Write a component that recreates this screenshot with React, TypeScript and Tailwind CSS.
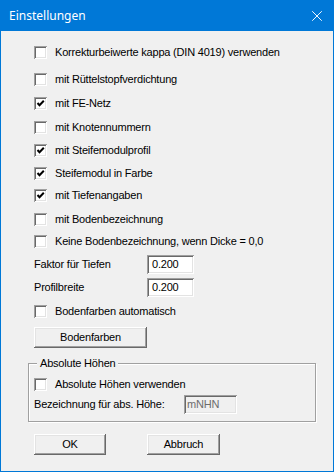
import { X } from 'lucide-react';

const sunken =
  'shadow-[inset_1px_1px_0_#a0a0a0,inset_-1px_-1px_0_#ffffff,inset_2px_2px_0_#696969,inset_-2px_-2px_0_#e3e3e3]';
const raised =
  'shadow-[inset_-1px_-1px_0_#696969,inset_1px_1px_0_#ffffff,inset_-2px_-2px_0_#a0a0a0,inset_2px_2px_0_#e3e3e3]';

function CheckBox({ checked }: { checked?: boolean }) {
  return (
    <span className={`w-[13px] h-[13px] bg-white shrink-0 flex items-center justify-center ${sunken}`}>
      {checked && (
        <svg width="13" height="13" viewBox="0 0 13 13">
          <polyline points="3.5,6 5.5,8.2 9.8,3.8" fill="none" stroke="#000" strokeWidth="2" />
        </svg>
      )}
    </span>
  );
}

function CheckRow({ label, checked, className = '' }: { label: string; checked?: boolean; className?: string }) {
  return (
    <div className={`flex items-center h-[13px] ${className}`}>
      <CheckBox checked={checked} />
      <span className="ml-[8px] leading-none">{label}</span>
    </div>
  );
}

function Button({ label, width }: { label: string; width: string }) {
  return (
    <button className={`h-[21px] ${width} bg-[#f0f0f0] ${raised} flex items-center justify-center leading-none`}>
      {label}
    </button>
  );
}

const OPTIONS = [
  { label: 'Korrekturbeiwerte kappa (DIN 4019) verwenden', checked: false, mt: 'mt-[15px]' },
  { label: 'mit Rüttelstopfverdichtung', checked: false, mt: 'mt-[14px]' },
  { label: 'mit FE-Netz', checked: true, mt: 'mt-[11px]' },
  { label: 'mit Knotennummern', checked: false, mt: 'mt-[11px]' },
  { label: 'mit Steifemodulprofil', checked: true, mt: 'mt-[10px]' },
  { label: 'Steifemodul in Farbe', checked: true, mt: 'mt-[10px]' },
  { label: 'mit Tiefenangaben', checked: true, mt: 'mt-[9px]' },
  { label: 'mit Bodenbezeichnung', checked: false, mt: 'mt-[11px]' },
  { label: 'Keine Bodenbezeichnung, wenn Dicke = 0,0', checked: false, mt: 'mt-[9px]' },
];

export default function App() {
  return (
    <div className="w-[334px] h-[472px] flex flex-col bg-[#0078d7] p-[1px] pt-0 text-[11px] tracking-[-0.2px] text-black font-['Liberation_Sans',Arial,sans-serif]">
      {/* Title bar */}
      <div className="h-[31px] flex items-center justify-between pl-[8px] pr-[7px] text-white tracking-normal">
        <span className="text-[12px] font-['Noto_Sans',sans-serif]">Einstellungen</span>
        <X size={18} strokeWidth={1.25} />
      </div>

      {/* Body */}
      <div className="flex-1 bg-[#f0f0f0] flex flex-col pl-[33px]">
        {OPTIONS.map((o) => (
          <CheckRow key={o.label} label={o.label} checked={o.checked} className={o.mt} />
        ))}

        <div className="flex items-center mt-[7px] h-[19px]">
          <span className="w-[113px]">Faktor für Tiefen</span>
          <div className={`w-[47px] h-[19px] bg-white ${sunken} flex items-center pl-[5px]`}>0.200</div>
        </div>
        <div className="flex items-center mt-[4px] h-[19px]">
          <span className="w-[113px]">Profilbreite</span>
          <div className={`w-[47px] h-[19px] bg-white ${sunken} flex items-center pl-[5px]`}>0.200</div>
        </div>

        <CheckRow label="Bodenfarben automatisch" className="mt-[8px]" />

        <div className="mt-[9px]">
          <Button label="Bodenfarben" width="w-[113px]" />
        </div>

        {/* Group box */}
        <div className="relative mt-[15px] -ml-[6px] w-[288px] h-[59px] border border-[#a0a0a0] shadow-[1px_1px_0_#ffffff,inset_1px_1px_0_#ffffff] pl-[5px] pt-[14px]">
          <span className="absolute -top-[7px] left-[8px] bg-[#f0f0f0] px-[3px] leading-[13px]">Absolute Höhen</span>
          <CheckRow label="Absolute Höhen verwenden" />
          <div className="flex items-center mt-[4px] h-[19px]">
            <span className="w-[150px] shrink-0">Bezeichnung für abs. Höhe:</span>
            <div className={`w-[53px] h-[19px] bg-[#f0f0f0] ${sunken} flex items-center pl-[3px] text-[#6d6d6d]`}>mNHN</div>
          </div>
        </div>

        <div className="flex mt-[12px] gap-[41px]">
          <Button label="OK" width="w-[72px]" />
          <Button label="Abbruch" width="w-[73px]" />
        </div>
      </div>
    </div>
  );
}
